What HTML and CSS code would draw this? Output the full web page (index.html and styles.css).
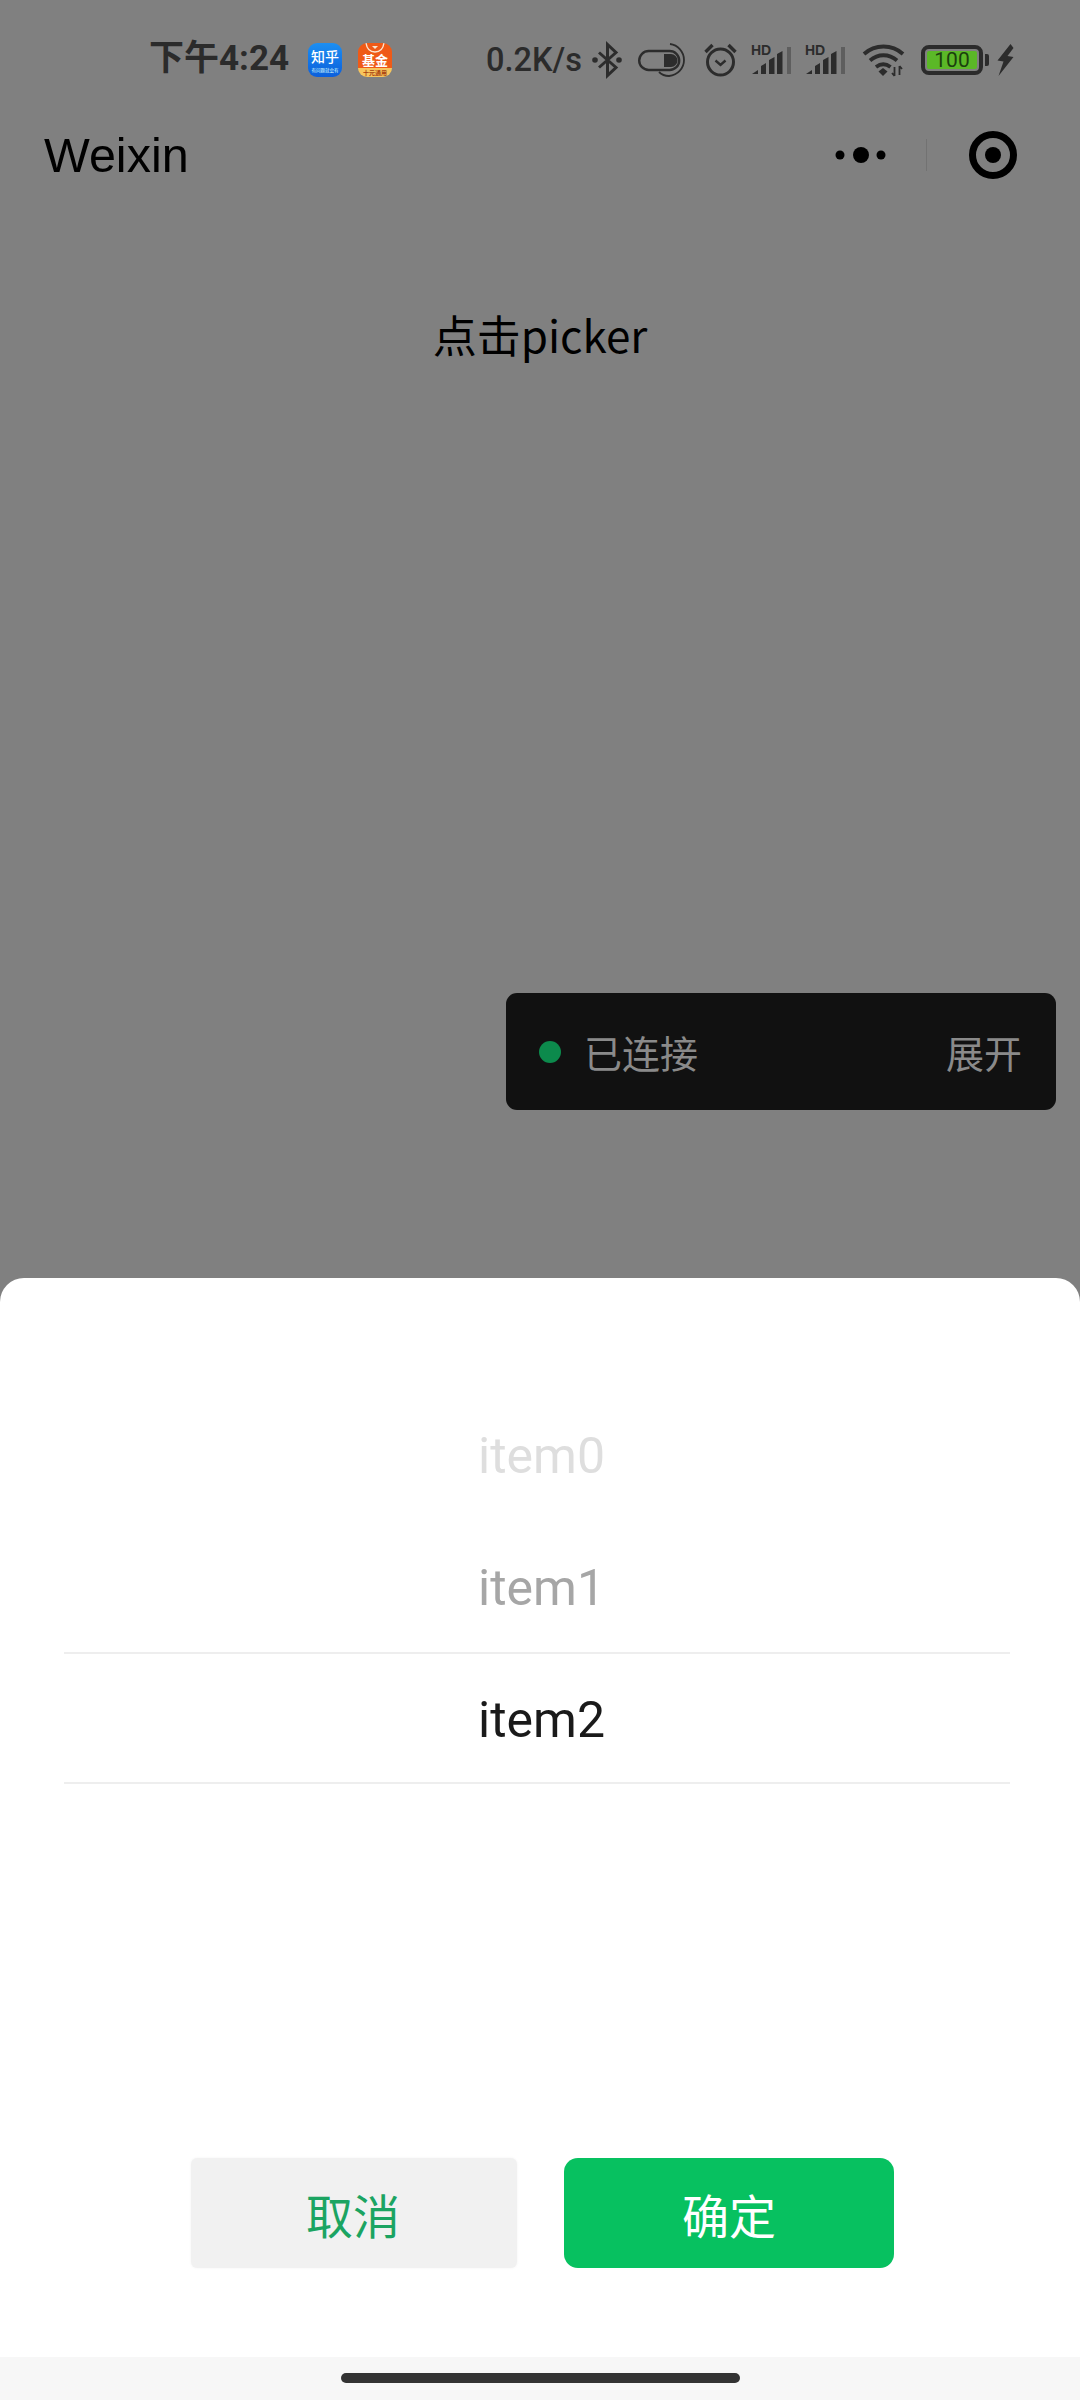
FILE: index.html
```html
<!DOCTYPE html>
<html lang="zh-CN">
<head>
<meta charset="utf-8">
<title>Weixin picker</title>
<link rel="stylesheet" href="styles.css">
</head>
<body>
<div class="screen">
  <header class="status">
    <span class="time">下午4:24</span>
    <svg class="ic zhihu" viewBox="0 0 34 34">
      <defs><linearGradient id="zh" x1="0" y1="0" x2="0" y2="1"><stop offset="0" stop-color="#1c8ff2"/><stop offset="1" stop-color="#0b5fdc"/></linearGradient></defs>
      <rect width="34" height="34" rx="9" fill="url(#zh)"/>
      <text x="17" y="19" class="svg-cjk zh-main">知乎</text>
      <text x="17" y="29" class="svg-cjk zh-sub">有问题就会有</text>
    </svg>
    <svg class="ic jijin" viewBox="0 0 34 34">
      <defs><clipPath id="jj"><rect width="34" height="34" rx="9"/></clipPath></defs>
      <g clip-path="url(#jj)">
        <rect width="34" height="25" fill="#ef5a17"/>
        <rect y="25" width="34" height="9" fill="#f7c65e"/>
        <path d="M8 0c1 7 5 9 9 9s8-2 9-9" fill="none" stroke="#fbe3cf" stroke-width="1.4"/>
        <path d="M14 3h6l-3 3z" fill="#fbe3cf"/>
        <text x="17" y="22" class="svg-cjk jj-main">基金</text>
        <text x="17" y="32" class="svg-cjk jj-sub">十元通用</text>
      </g>
    </svg>
    <span class="speed">0.2K/s</span>
    <svg class="ic bt" viewBox="0 0 30 34">
      <path d="M7 9.500l17 15-8.500 8V1.500l8.500 8L7 24.500" fill="none" stroke="#2c2c2c" stroke-width="3"/>
      <circle cx="3" cy="17" r="2.800" fill="#2c2c2c"/><circle cx="27" cy="17" r="2.800" fill="#2c2c2c"/>
    </svg>
    <svg class="ic toggle" viewBox="0 0 48 34">
      <rect x="1.200" y="8" width="40" height="19" rx="9.500" fill="none" stroke="#2c2c2c" stroke-width="2.400"/>
      <path d="M26 11h7a6.500 6.500 0 0 1 0 13h-7z" fill="#2c2c2c"/>
      <path d="M32 1c8 1 14 8 14 16s-6 15-15 16c-4 0-8-2-10-4" fill="none" stroke="#2c2c2c" stroke-width="1.800"/>
    </svg>
    <svg class="ic alarm" viewBox="0 0 33 34">
      <circle cx="16.500" cy="19" r="13" fill="none" stroke="#2c2c2c" stroke-width="3"/>
      <path d="M11.500 17.500l5 4.500 5-4.500" fill="none" stroke="#2c2c2c" stroke-width="2.400"/>
      <path d="M1.500 9L8.500 2M31.500 9L24.500 2" stroke="#2c2c2c" stroke-width="3.400"/>
    </svg>
    <svg class="ic signal" viewBox="0 0 41 34">
      <text x="0" y="12" class="hd">HD</text>
      <path d="M1 31l6-4v4zM10 31v-8l5-3v11zM18 31V17l5.500-3v17zM26 31V11l5.500-3v23z" fill="#2c2c2c"/>
      <rect x="36" y="4" width="4" height="27" fill="#5e5e5e"/>
    </svg>
    <svg class="ic signal sig2" viewBox="0 0 41 34">
      <text x="0" y="12" class="hd">HD</text>
      <path d="M1 31l6-4v4zM10 31v-8l5-3v11zM18 31V17l5.500-3v17zM26 31V11l5.500-3v23z" fill="#2c2c2c"/>
      <rect x="36" y="4" width="4" height="27" fill="#5e5e5e"/>
    </svg>
    <svg class="ic wifi" viewBox="0 0 43 34">
      <path d="M2 11c11-10 28-10 39 0M8 17.500c8-7 19-7 27 0M14 24c4.500-3.500 10-3.500 14.500 0" fill="none" stroke="#2c2c2c" stroke-width="3.800"/>
      <path d="M21 33l-4.500-4.500 4.500-3.500 4.500 3.500z" fill="#2c2c2c"/>
      <path d="M32.500 24v9M30 30l2.500 3M37.500 23v9M37.500 23l2.500 3" fill="none" stroke="#2c2c2c" stroke-width="1.800"/>
    </svg>
    <div class="battery"><span class="battery-fill">100</span></div>
    <svg class="ic bolt" viewBox="0 0 17 34">
      <path d="M13.500 1L0.500 17.500l6 1L1.500 33 16.500 14l-6-1 6-8z" fill="#2c2c2c"/>
    </svg>
  </header>

  <nav class="nav">
    <span class="nav-title">Weixin</span>
    <div class="capsule">
      <svg class="dots" viewBox="0 0 54 20">
        <circle cx="5" cy="10" r="4.500" fill="#000"/><circle cx="26" cy="10" r="8" fill="#000"/><circle cx="46" cy="10" r="4.500" fill="#000"/>
      </svg>
      <span class="capsule-div"></span>
      <svg class="target" viewBox="0 0 48 48">
        <circle cx="24" cy="24" r="20.500" fill="none" stroke="#000" stroke-width="7"/><circle cx="24" cy="24" r="8" fill="#000"/>
      </svg>
    </div>
  </nav>

  <main class="page">
    <p class="page-text">点击picker</p>
  </main>

  <aside class="toast">
    <span class="toast-dot"></span>
    <span class="toast-text">已连接</span>
    <span class="toast-action">展开</span>
  </aside>

  <section class="sheet">
    <div class="picker">
      <div class="row row-far">item0</div>
      <div class="row row-near">item1</div>
      <div class="row row-selected">item2</div>
    </div>
    <div class="actions">
      <button class="btn btn-cancel">取消</button>
      <button class="btn btn-ok">确定</button>
    </div>
  </section>

  <footer class="home"><span class="home-bar"></span></footer>
</div>
</body>
</html>
```
FILE: styles.css
```css
* { box-sizing: border-box; }
html, body { margin: 0; padding: 0; }
body { font-family: "Noto Sans CJK SC", "Noto Sans", sans-serif; }

.screen {
  width: 1080px;
  height: 2400px;
  background: #808080;
  display: flex;
  flex-direction: column;
  overflow: hidden;
}

/* status bar */
.status {
  height: 120px;
  padding-left: 149px;
  display: flex;
  align-items: center;
  flex: none;
  color: #2b2b2b;
}
.time {
  width: 141px;
  font-size: 35px;
  line-height: 40px;
  padding-bottom: 2px;
  font-weight: 700;
  white-space: nowrap;
  font-family: "Roboto", "Noto Sans CJK SC", sans-serif;
}
.ic { display: block; height: 34px; flex: none; overflow: visible; }
.zhihu { width: 34px; margin-left: 18px; }
.jijin { width: 34px; margin-left: 16px; }
.svg-cjk { font-family: "Noto Sans CJK SC", sans-serif; text-anchor: middle; }
.zh-main { font-size: 14px; fill: #fff; font-weight: 500; }
.zh-sub { font-size: 4.500px; fill: #dff; }
.jj-main { font-size: 13px; fill: #fff; font-weight: 700; }
.jj-sub { font-size: 6px; fill: #a8400f; font-weight: 700; }
.speed {
  width: 97px;
  margin-left: 94px;
  font-family: "Roboto", sans-serif;
  font-size: 32.500px;
  font-weight: 500;
  white-space: nowrap;
}
.bt { width: 30px; margin-left: 9px; }
.toggle { width: 48px; margin-left: 16px; }
.alarm { width: 33px; margin-left: 18px; }
.signal { width: 41px; margin-left: 14px; }
.sig2 { margin-left: 13px; }
.hd { font-family: "Liberation Sans", sans-serif; font-weight: 700; font-size: 14px; fill: #2c2c2c; }
.wifi { width: 43px; margin-left: 16px; }
.battery {
  position: relative;
  width: 62px;
  height: 30px;
  margin-left: 16px;
  border: 4px solid #2b2b2b;
  border-radius: 8px;
  padding: 2px;
  flex: none;
}
.battery::after {
  content: "";
  position: absolute;
  right: -10px;
  top: 5px;
  width: 4px;
  height: 12px;
  background: #2b2b2b;
  border-radius: 0 2px 2px 0;
}
.battery-fill {
  display: flex;
  align-items: center;
  justify-content: center;
  height: 100%;
  background: #5bb827;
  border-radius: 2px;
  color: #1b3f0e;
  font-family: "Roboto", sans-serif;
  font-size: 21px;
  line-height: 1;
}
.bolt { width: 17px; margin-left: 14px; }

/* nav */
.nav {
  height: 70px;
  flex: none;
  display: flex;
  align-items: center;
  padding-left: 44px;
}
.nav-title {
  font-family: "Liberation Sans", sans-serif;
  font-size: 48.500px;
  color: #000;
}
.capsule {
  margin-left: auto;
  display: flex;
  align-items: center;
  padding-right: 63px;
}
.dots { width: 54px; height: 20px; display: block; }
.capsule-div { width: 1px; height: 32px; background: #727272; margin-left: 37px; margin-right: 42px; }
.target { width: 48px; height: 48px; display: block; }

/* page */
.page {
  height: 803px;
  flex: none;
  padding-top: 117px;
}
.page-text {
  margin: 0;
  text-align: center;
  font-size: 44px;
  line-height: 54px;
  color: #000;
}

/* toast */
.toast {
  width: 550px;
  height: 117px;
  margin-left: 506px;
  flex: none;
  background: #111;
  border-radius: 11px;
  display: flex;
  align-items: center;
  padding: 0 34px 0 33px;
  color: #8a8a8a;
  font-size: 38px;
}
.toast-dot { width: 22px; height: 22px; border-radius: 50%; background: #0c8a4c; flex: none; }
.toast-text { margin-left: 23px; }
.toast-action { margin-left: auto; }

/* sheet */
.sheet {
  margin-top: 168px;
  height: 1079px;
  flex: none;
  background: #fff;
  border-radius: 24px 24px 0 0;
  padding-top: 110px;
  display: flex;
  flex-direction: column;
}
.picker { margin: 0 70px 0 64px; }
.row {
  height: 132px;
  display: flex;
  align-items: center;
  justify-content: center;
  font-family: "Roboto", sans-serif;
  font-size: 50px;
  padding: 3px 0 0 9px;
}
.row-far { color: #dedede; }
.row-near { color: #a6a6a6; }
.row-selected {
  color: #1a1a1a;
  border-top: 2px solid #eeeeee;
  border-bottom: 2px solid #eeeeee;
}
.actions {
  margin-top: 374px;
  padding-left: 191px;
  display: flex;
  gap: 47px;
}
.btn {
  height: 110px;
  border: 0;
  font-family: "Noto Sans CJK SC", sans-serif;
  font-size: 47px;
  font-weight: 400;
  padding: 0;
}
.btn-cancel {
  width: 326px;
  padding-right: 2px;
  background: #f1f1f1;
  color: #1ba462;
  border-radius: 6px;
  box-shadow: 0 0 3px #f4f4f4;
}
.btn-ok {
  width: 330px;
  background: #07c160;
  color: #fff;
  border-radius: 14px;
}

/* home indicator */
.home {
  flex: 1;
  background: #f7f7f7;
  display: flex;
  justify-content: center;
  padding-top: 16px;
}
.home-bar { width: 399px; height: 10px; background: #333; border-radius: 5px; }
```
